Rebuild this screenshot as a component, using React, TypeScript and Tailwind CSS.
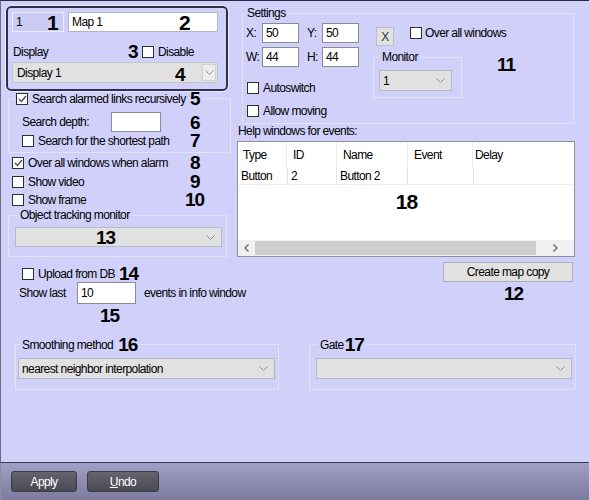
import React from 'react';

const Check = ({ checked = false }: { checked?: boolean }) => (
  <span className="w-[12px] h-[12px] shrink-0 bg-white border border-[#2e2e2e] flex items-center justify-center">
    {checked && (
      <svg width="9" height="8" viewBox="0 0 9 8">
        <polyline points="1,4 3.5,6.5 8,1" fill="none" stroke="#4a4a4a" strokeWidth="1.3" />
      </svg>
    )}
  </span>
);

// annotation numbers drawn over the form
const Num = ({ children, className = '' }: { children: React.ReactNode; className?: string }) => (
  <span className={`font-bold text-[19px] leading-[13px] tracking-[-1px] text-black whitespace-nowrap shrink-0 ${className}`}>{children}</span>
);

const Chevron = () => (
  <svg width="9" height="5" viewBox="0 0 9 5">
    <polyline points="0.5,0.5 4.5,4.5 8.5,0.5" fill="none" stroke="#8c8c8c" strokeWidth="1" />
  </svg>
);

const Combo = ({ text = '', className = '', children }: { text?: string; className?: string; children?: React.ReactNode }) => (
  <div className={`relative flex items-center bg-[#e1e1e1] border border-[#b8b8c4] ${className}`}>
    <span className="pl-[3px] flex-1 whitespace-nowrap">{text}</span>
    <span className="w-[14px] mr-[4px] flex justify-center">
      <Chevron />
    </span>
    {children}
  </div>
);

const Field = ({ value = '', className = '' }: { value?: string; className?: string }) => (
  <div className={`shrink-0 flex items-center bg-white border border-[#8b8b96] pl-[3px] ${className}`}>{value}</div>
);

export default function App() {
  return (
    <div className="w-[589px] h-[500px] flex flex-col overflow-hidden font-['Liberation_Sans',Arial,sans-serif] text-[12px] tracking-[-0.6px] text-black">
      {/* main panel */}
      <div className="h-[463px] shrink-0 flex flex-col bg-[#d0d0fa] border-t border-t-[#2a2940] border-l border-l-[#6c6c80] border-b border-b-[#3c3b52]">
        <div className="flex flex-row">
          {/* left column */}
          <div className="w-[236px] shrink-0 flex flex-col">
            {/* map id / name / display */}
            <div className="ml-[5px] mt-[5px] w-[222px] h-[85px] border-2 border-[#2f2f4c] rounded-[5px] outline outline-1 outline-[#e6e6fd] flex flex-col">
              <div className="mt-[4px] ml-[4px] flex flex-row">
                <div className="relative shrink-0 w-[52px] h-[20px] bg-[#cbcbf4] border border-[#e9e9ff] flex items-center pl-[3px]">
                  1
                  <Num className="absolute left-[34px] top-[3px] text-[21px]">1</Num>
                </div>
                <div className="relative shrink-0 ml-[4px] w-[150px] h-[20px] bg-white border border-[#b5b5c5] flex items-center pl-[3px]">
                  Map 1
                  <Num className="absolute left-[110px] top-[3px] text-[21px]">2</Num>
                </div>
              </div>
              <div className="mt-[13px] ml-[5px] h-[13px] flex flex-row items-center">
                <span className="w-[115px] shrink-0">Display</span>
                <Num className="w-[14px]">3</Num>
                <Check />
                <span className="ml-[4px]">Disable</span>
              </div>
              <div className="mt-[4px] ml-[4px] w-[206px] h-[21px] relative flex items-center bg-[#e1e1e1] border border-[#c4c4cc]">
                <span className="pl-[4px] flex-1">Display 1</span>
                <span className="w-[14px] h-[17px] mr-[1px] bg-[#ededed] border border-[#cfcfd6] flex items-center justify-center">
                  <Chevron />
                </span>
                <Num className="absolute left-[162px] top-[5px]">4</Num>
              </div>
            </div>

            {/* recursive search group */}
            <fieldset className="mt-[1px] ml-[7px] w-[223px] border border-[#e3e3f8] pb-[5px]">
              <legend className="ml-[7px] h-[13px] flex flex-row items-center">
                <Check checked />
                <span className="ml-[4px] w-[158px] shrink-0 whitespace-nowrap">Search alarmed links recursively</span>
                <Num className="pr-[2px]">5</Num>
              </legend>
              <div className="mt-[7px] ml-[13px] h-[20px] flex flex-row items-center">
                <span className="w-[89px] shrink-0">Search depth:</span>
                <Field className="w-[50px] h-[20px]" />
                <Num className="ml-[29px]">6</Num>
              </div>
              <div className="mt-[2px] ml-[13px] h-[13px] flex flex-row items-center">
                <Check />
                <span className="ml-[4px] w-[152px] shrink-0 whitespace-nowrap">Search for the shortest path</span>
                <Num>7</Num>
              </div>
            </fieldset>

            <div className="mt-[3px] ml-[11px] h-[13px] flex flex-row items-center">
              <Check checked />
              <span className="ml-[4px] w-[162px] shrink-0 whitespace-nowrap">Over all windows when alarm</span>
              <Num>8</Num>
            </div>
            <div className="mt-[6px] ml-[11px] h-[13px] flex flex-row items-center">
              <Check />
              <span className="ml-[4px] w-[162px] shrink-0">Show video</span>
              <Num>9</Num>
            </div>
            <div className="mt-[5px] ml-[11px] h-[13px] flex flex-row items-center">
              <Check />
              <span className="ml-[4px] w-[157px] shrink-0">Show frame</span>
              <Num>10</Num>
            </div>

            <fieldset className="mt-[3px] ml-[7px] w-[219px] border border-[#e3e3f8] pb-[9px]">
              <legend className="ml-[9px] px-[2px] h-[13px] leading-[13px] whitespace-nowrap">Object tracking monitor</legend>
              <Combo className="mt-[5px] ml-[6px] w-[207px] h-[20px]">
                <Num className="absolute left-[80px] top-[3px]">13</Num>
              </Combo>
            </fieldset>

            <div className="mt-[10px] ml-[21px] h-[13px] flex flex-row items-center">
              <Check />
              <span className="ml-[4px] whitespace-nowrap">Upload from DB</span>
              <Num className="ml-[4px]">14</Num>
            </div>
            <div className="mt-[2px] ml-[18px] h-[22px] flex flex-row items-center whitespace-nowrap">
              <span className="w-[58px] shrink-0">Show last</span>
              <Field value="10" className="w-[59px] h-[22px]" />
              <span className="ml-[8px] shrink-0">events in info window</span>
            </div>
            <Num className="mt-[4px] ml-[99px] h-[15px] leading-[15px]">15</Num>
          </div>

          {/* right column */}
          <div className="w-[351px] shrink-0 flex flex-col">
            <fieldset className="mt-[6px] ml-[5px] w-[332px] border border-[#e3e3f8] pb-[6px]">
              <legend className="ml-[2px] px-[2px] h-[13px] leading-[13px]">Settings</legend>
              <div className="flex flex-row">
                <div className="ml-[3px] shrink-0 flex flex-col">
                  <div className="mt-[3px] h-[20px] flex flex-row items-center">
                    <span className="w-[16px] shrink-0">X:</span>
                    <Field value="50" className="w-[37px] h-[20px]" />
                    <span className="ml-[8px] w-[15px] shrink-0">Y:</span>
                    <Field value="50" className="w-[37px] h-[20px]" />
                  </div>
                  <div className="mt-[4px] h-[20px] flex flex-row items-center">
                    <span className="w-[16px] shrink-0">W:</span>
                    <Field value="44" className="w-[37px] h-[20px]" />
                    <span className="ml-[8px] w-[15px] shrink-0">H:</span>
                    <Field value="44" className="w-[37px] h-[20px]" />
                  </div>
                  <div className="mt-[14px] ml-[1px] h-[13px] flex flex-row items-center">
                    <Check />
                    <span className="ml-[4px]">Autoswitch</span>
                  </div>
                  <div className="mt-[10px] ml-[1px] h-[13px] flex flex-row items-center">
                    <Check />
                    <span className="ml-[4px]">Allow moving</span>
                  </div>
                </div>
                <div className="ml-[14px] flex flex-col">
                  <div className="mt-[7px] flex flex-row items-start">
                    <div className="ml-[3px] shrink-0 w-[18px] h-[19px] bg-[#e1e1e1] border border-[#bdbdc8] flex items-center justify-center text-[#333]">X</div>
                    <div className="ml-[16px] -mt-[3px] flex flex-row items-center whitespace-nowrap">
                      <Check />
                      <span className="ml-[3px]">Over all windows</span>
                    </div>
                  </div>
                  <div className="flex flex-row items-start">
                    <fieldset className="mt-[5px] w-[89px] shrink-0 border border-[#e3e3f8] pb-[6px]">
                      <legend className="ml-[6px] px-[2px] h-[13px] leading-[13px]">Monitor</legend>
                      <Combo text="1" className="mt-[6px] ml-[5px] w-[73px] h-[21px]" />
                    </fieldset>
                    <Num className="ml-[35px] mt-[11px] h-[15px] leading-[15px]">11</Num>
                  </div>
                </div>
              </div>
            </fieldset>

            <div className="mt-[1px] ml-[1px] h-[13px] leading-[13px]">Help windows for events:</div>

            {/* events table */}
            <div className="mt-[3px] w-[338px] h-[116px] bg-white border border-[#8f8f9c] flex flex-col">
              <div className="h-[26px] flex flex-row">
                <div className="w-[49px] border-r border-[#ececec] flex items-center pl-[5px]">Type</div>
                <div className="w-[50px] border-r border-[#ececec] flex items-center pl-[6px]">ID</div>
                <div className="w-[71px] border-r border-[#ececec] flex items-center pl-[6px]">Name</div>
                <div className="w-[65px] border-r border-[#ececec] flex items-center pl-[6px]">Event</div>
                <div className="flex-1 flex items-center pl-[2px]">Delay</div>
              </div>
              <div className="h-[17px] flex flex-row border-b border-[#ececec]">
                <div className="w-[50px] border-r border-[#e4e4e4] flex items-center pl-[3px]">Button</div>
                <div className="w-[49px] border-r border-[#e4e4e4] flex items-center pl-[3px]">2</div>
                <div className="w-[71px] border-r border-[#e4e4e4] flex items-center pl-[3px]">Button 2</div>
                <div className="w-[66px] border-r border-[#e4e4e4]"></div>
                <div className="flex-1"></div>
              </div>
              <div className="flex-1 flex justify-center pt-[9px] pl-[1px]">
                <Num className="h-[15px] leading-[15px] text-[21px]">18</Num>
              </div>
              <div className="h-[16px] flex flex-row bg-[#f0f0f0]">
                <div className="w-[17px] flex items-center justify-center">
                  <svg width="5" height="8" viewBox="0 0 5 8"><polyline points="4.5,0.5 1,4 4.5,7.5" fill="none" stroke="#606060" strokeWidth="1.2" /></svg>
                </div>
                <div className="w-[281px] my-[1px] bg-[#cdcdcd]"></div>
                <div className="flex-1 flex items-center justify-center">
                  <svg width="5" height="8" viewBox="0 0 5 8"><polyline points="0.5,0.5 4,4 0.5,7.5" fill="none" stroke="#606060" strokeWidth="1.2" /></svg>
                </div>
              </div>
            </div>

            <div className="mt-[5px] ml-[206px] w-[130px] h-[20px] bg-[#e1e1e1] border border-[#adadb8] flex items-center justify-center whitespace-nowrap">Create map copy</div>
            <Num className="mt-[4px] ml-[267px] h-[15px] leading-[15px]">12</Num>
          </div>
        </div>

        {/* smoothing / gate */}
        <div className="mt-[15px] flex flex-row">
          <fieldset className="ml-[14px] w-[264px] shrink-0 border border-[#e3e3f8] pb-[10px]">
            <legend className="ml-[4px] px-[2px] h-[13px] flex flex-row items-center whitespace-nowrap">
              <span>Smoothing method</span>
              <Num className="ml-[5px]">16</Num>
            </legend>
            <Combo text="nearest neighbor interpolation" className="mt-[7px] ml-[2px] w-[257px] h-[21px]" />
          </fieldset>
          <fieldset className="ml-[30px] w-[267px] shrink-0 border border-[#e3e3f8] pb-[10px]">
            <legend className="ml-[8px] px-[2px] h-[13px] flex flex-row items-center whitespace-nowrap">
              <span>Gate</span>
              <Num className="ml-[1px]">17</Num>
            </legend>
            <Combo className="mt-[7px] ml-[6px] w-[256px] h-[21px]" />
          </fieldset>
        </div>
      </div>

      {/* bottom bar */}
      <div className="flex-1 flex flex-row items-start bg-gradient-to-b from-[#a19fc5] to-[#7d7b9e] border-l border-l-[#8d8ca8]">
        <div className="mt-[8px] ml-[10px] w-[66px] h-[21px] rounded-[3px] bg-gradient-to-b from-[#65646f] to-[#4b4a54] border border-[#3b3a44] text-white flex items-center justify-center">Apply</div>
        <div className="mt-[8px] ml-[10px] w-[72px] h-[21px] rounded-[3px] bg-gradient-to-b from-[#65646f] to-[#4b4a54] border border-[#3b3a44] text-white flex items-center justify-center">
          <span><span className="underline">U</span>ndo</span>
        </div>
      </div>
    </div>
  );
}
